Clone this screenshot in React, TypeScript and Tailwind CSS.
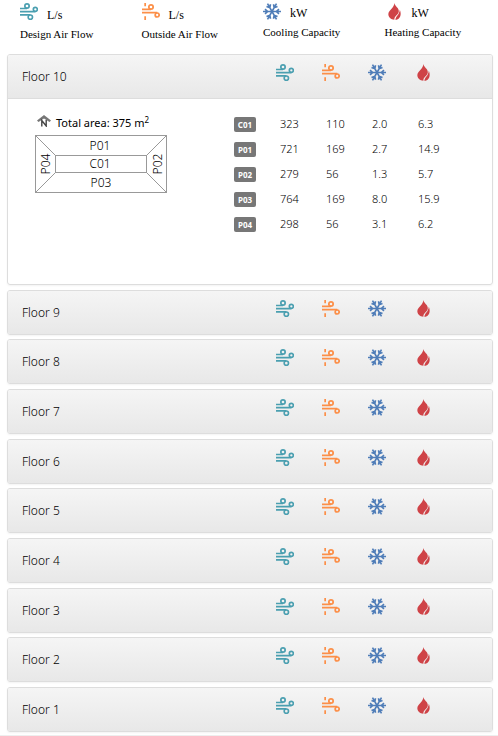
import { useState } from "react";
import type { ReactNode } from "react";

function DesignAirIcon() {
  return (
    <svg viewBox="0 0 54 51" className="h-[17px] w-[18px]" fill="none" stroke="#4a9fb0" strokeWidth="5" role="img" aria-label="Design air flow">
      <path d="M0 16.500H21M0 26H46M0 35.500H31" />
      <circle cx="21" cy="9" r="6.500" />
      <circle cx="46" cy="19" r="6" />
      <circle cx="31" cy="42.500" r="6.500" />
    </svg>
  );
}

function OutsideAirIcon() {
  return (
    <svg viewBox="0 0 54 51" className="h-[17px] w-[18px]" fill="none" stroke="#fc8f48" strokeWidth="5.2" role="img" aria-label="Outside air flow">
      <path d="M9.500 0V10M9.500 40V51M0 19H27M0 29H46" />
      <circle cx="27" cy="12" r="6.500" />
      <circle cx="45.500" cy="36" r="6" />
    </svg>
  );
}

function CoolingIcon() {
  return (
    <svg viewBox="0 0 54 51" className="h-[17px] w-[18px]" fill="none" stroke="#4f7db8" strokeWidth="4.8" role="img" aria-label="Cooling capacity">
      {[0, 60, 120, 180, 240, 300].map((angle) => (
        <path key={angle} transform={`rotate(${angle} 27 25.5)`} d="M27 25.500H54M48 18.500L40 25.500L48 32.500" />
      ))}
    </svg>
  );
}

function HeatingIcon() {
  return (
    <svg viewBox="0 0 54 51" className="h-[17px] w-[18px]" fill="#cf4347" role="img" aria-label="Heating capacity">
      <path d="M28 0C30 10 42 15 41.500 25C41 36 28 38 28 50C18 50 10 43 10 34C10 21 28 15 28 0Z" />
      <path d="M44.500 20C50 34 47 48 31.500 51C30.500 40 43.500 36 44.500 20Z" />
    </svg>
  );
}

const metrics: { label: string; unit: string; icon: ReactNode; air: boolean }[] = [
  { label: "Design Air Flow", unit: "L/s", icon: <DesignAirIcon />, air: true },
  { label: "Outside Air Flow", unit: "L/s", icon: <OutsideAirIcon />, air: true },
  { label: "Cooling Capacity", unit: "kW", icon: <CoolingIcon />, air: false },
  { label: "Heating Capacity", unit: "kW", icon: <HeatingIcon />, air: false },
];

const zones = [
  { name: "C01", values: ["323", "110", "2.0", "6.3"] },
  { name: "P01", values: ["721", "169", "2.7", "14.9"] },
  { name: "P02", values: ["279", "56", "1.3", "5.7"] },
  { name: "P03", values: ["764", "169", "8.0", "15.9"] },
  { name: "P04", values: ["298", "56", "3.1", "6.2"] },
];

const floors = [10, 9, 8, 7, 6, 5, 4, 3, 2, 1];

function Legend() {
  return (
    <header className="grid h-[54px] grid-cols-4 pr-[5px] pl-[7px] font-['Liberation_Serif',serif] text-[11px] text-black">
      {metrics.map((m) => (
        <div key={m.label} className="pt-[3px] pl-[13px] whitespace-nowrap">
          <div className="flex h-[18px] gap-[9px]">
            {m.icon}
            <span className={m.air ? "pt-1 text-xs leading-4" : "pt-0.5 text-xs leading-4"}>{m.unit}</span>
          </div>
          <div className={m.air ? "pt-[5px] leading-4" : "pt-[3px] leading-4"}>{m.label}</div>
        </div>
      ))}
    </header>
  );
}

function NorthArrow() {
  return (
    <svg viewBox="0 0 14 12" className="h-3 w-3.5" role="img" aria-label="North">
      <path d="M7 0L14 5.500L12.500 7L7 3.500L1.500 7L0 5.500Z" fill="#777" />
      <path d="M4.800 11.500V5.500L9.200 11V5" fill="none" stroke="#444" strokeWidth="1.400" />
    </svg>
  );
}

function FloorPlan() {
  return (
    <svg viewBox="0 0 132 59" className="h-[59px] w-[132px]" role="img" aria-label="Zone plan">
      <g fill="none" stroke="#999">
        <rect x="0.5" y="0.5" width="131" height="57" />
        <rect x="20.5" y="20.500" width="91" height="17" />
        <path d="M0.500 0.500L20.500 20.500M131.500 0.500L111.500 20.500M0.500 57.500L20.500 37.500M131.500 57.500L111.500 37.500" />
      </g>
      <g fill="#000" fontSize="12" textAnchor="middle" className="font-light">
        <text x="65" y="15">P01</text>
        <text x="65" y="33">C01</text>
        <text x="66" y="52">P03</text>
        <text transform="translate(15 29) rotate(-90)">P04</text>
        <text transform="translate(127 29) rotate(-90)">P02</text>
      </g>
    </svg>
  );
}

function FloorDetails() {
  return (
    <div className="flex h-[185px] justify-between pt-[14px] pr-7 pl-[27px]">
      <div>
        <p className="flex h-[22px] gap-[5px] text-[11px] leading-5 text-black">
          <span className="pt-0.5 pl-0.5">
            <NorthArrow />
          </span>
          <span>
            Total area: 375 m<sup className="text-[8px]">2</sup>
          </span>
        </p>
        <FloorPlan />
      </div>
      <table className="h-[125px] w-[230px] table-fixed text-left text-[11px] leading-4 text-black">
        <tbody>
          {zones.map((z) => (
            <tr key={z.name} className="h-[25px] align-top">
              <th scope="row" className="p-0 pt-1">
                <span className="block h-[15px] w-[22px] rounded-xs bg-[#777] text-center text-[8px] leading-[15px] font-bold text-white">
                  {z.name}
                </span>
              </th>
              {z.values.map((v, i) => (
                <td key={i} className="p-0 pt-[3px] font-light">
                  {v}
                </td>
              ))}
            </tr>
          ))}
        </tbody>
      </table>
    </div>
  );
}

export default function App() {
  const [open, setOpen] = useState(10);
  return (
    <main className="flex min-h-screen flex-col border-b border-[#eee] bg-white font-['Noto_Sans','Open_Sans',sans-serif]">
      <Legend />
      <div className="flex grow flex-col justify-between pr-[5px] pb-[3px] pl-[7px]">
        {floors.map((floor) => (
          <section key={floor} className="overflow-hidden rounded-[3px] border border-[#ddd] shadow-xs">
            <h2 className={open === floor ? "border-b border-[#ddd]" : ""}>
              <button
                type="button"
                aria-expanded={open === floor}
                onClick={() => setOpen(floor)}
                className="flex h-[43px] w-full justify-between bg-linear-to-b from-[#f5f5f5] to-[#e8e8e8] pr-8 pl-[14px] text-left text-xs font-light text-black"
              >
                <span className="pt-3 leading-5">Floor {floor}</span>
                <span className="grid w-[184px] grid-cols-4 pt-[9px]">
                  {metrics.map((m) => (
                    <span key={m.label}>{m.icon}</span>
                  ))}
                </span>
              </button>
            </h2>
            {open === floor && <FloorDetails />}
          </section>
        ))}
      </div>
    </main>
  );
}
